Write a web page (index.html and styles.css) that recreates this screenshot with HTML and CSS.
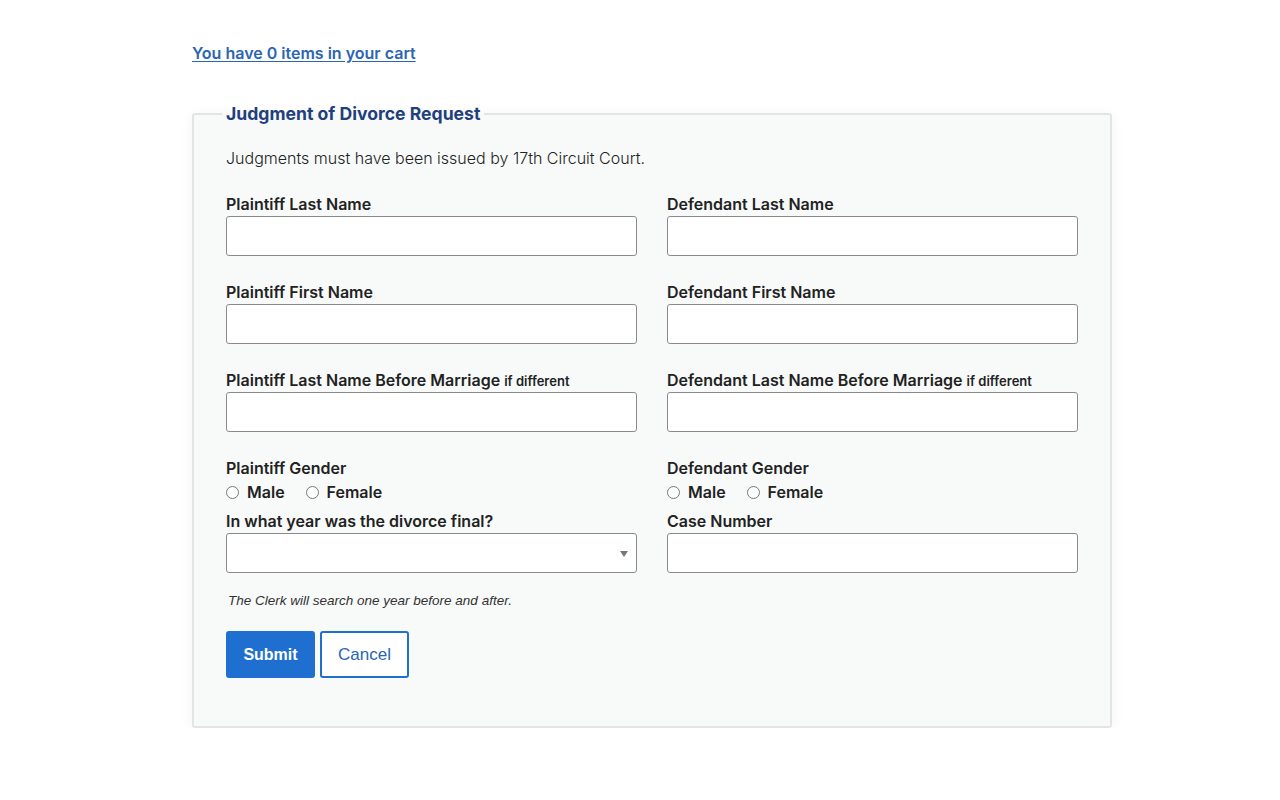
FILE: index.html
```html
<!DOCTYPE html>
<html lang="en">
<head>
<meta charset="utf-8">
<title>Judgment of Divorce Request</title>
<link rel="stylesheet" href="styles.css">
</head>
<body>
<div class="page">
  <p class="cart"><a href="#">You have 0 items in your cart</a></p>
  <form class="request">
    <fieldset class="panel">
      <legend class="panel-title">Judgment of Divorce Request</legend>
      <p class="intro">Judgments must have been issued by 17th Circuit Court.</p>
      <div class="grid">
        <div class="field">
          <label class="label">Plaintiff Last Name</label>
          <input class="input" type="text">
        </div>
        <div class="field">
          <label class="label">Defendant Last Name</label>
          <input class="input" type="text">
        </div>
        <div class="field">
          <label class="label">Plaintiff First Name</label>
          <input class="input" type="text">
        </div>
        <div class="field">
          <label class="label">Defendant First Name</label>
          <input class="input" type="text">
        </div>
        <div class="field">
          <label class="label">Plaintiff Last Name Before Marriage <span class="hint">if different</span></label>
          <input class="input" type="text">
        </div>
        <div class="field">
          <label class="label">Defendant Last Name Before Marriage <span class="hint">if different</span></label>
          <input class="input" type="text">
        </div>
        <div class="field field-tight">
          <span class="label">Plaintiff Gender</span>
          <div class="radios">
            <label class="radio"><input type="radio" name="pg"><span>Male</span></label>
            <label class="radio"><input type="radio" name="pg"><span>Female</span></label>
          </div>
        </div>
        <div class="field field-tight">
          <span class="label">Defendant Gender</span>
          <div class="radios">
            <label class="radio"><input type="radio" name="dg"><span>Male</span></label>
            <label class="radio"><input type="radio" name="dg"><span>Female</span></label>
          </div>
        </div>
        <div class="field field-last">
          <label class="label">In what year was the divorce final?</label>
          <div class="select">
            <select class="input"><option></option></select>
          </div>
        </div>
        <div class="field field-last">
          <label class="label">Case Number</label>
          <input class="input" type="text">
        </div>
      </div>
      <p class="note">The Clerk will search one year before and after.</p>
      <div class="actions">
        <button type="button" class="btn btn-primary">Submit</button>
        <button type="button" class="btn btn-outline">Cancel</button>
      </div>
    </fieldset>
  </form>
</div>
</body>
</html>
```
FILE: styles.css
```css
html, body {
  margin: 0;
  padding: 0;
  background: #ffffff;
}
body {
  font-family: Inter, "Noto Sans", Arial, sans-serif;
  color: #222222;
}
.page {
  padding: 42px 168px 0 192px;
}
.cart {
  margin: 0;
  font-size: 16px;
  line-height: 22px;
  font-weight: 600;
}
.cart a {
  color: #2b65b3;
  text-decoration: underline;
  text-underline-offset: 2px;
}
.request {
  margin: 39px 0 0 0;
}
.panel {
  margin: 0;
  border: 2px solid #e2e5e6;
  border-radius: 3px;
  background: #f8fafa;
  box-shadow: 0 2px 14px rgba(0, 0, 0, 0.05);
  padding: 0 31px 48px 32px;
  min-width: 0;
}
.panel-title {
  font-size: 17.6px;
  font-weight: 700;
  color: #1f3f7f;
  padding: 0 4px;
  margin-left: -4px;
  line-height: 22px;
}
.intro {
  margin: 22px 0 0 0;
  font-size: 16px;
  line-height: 22px;
  font-weight: 300;
  color: #222;
}
.grid {
  margin-top: 25px;
  display: grid;
  grid-template-columns: 411px 411px;
  column-gap: 30px;
}
.field {
  display: flex;
  flex-direction: column;
  margin-bottom: 26px;
}
.field-tight {
  margin-bottom: 7px;
}
.field-last {
  margin-bottom: 0;
}
.label {
  font-size: 16px;
  line-height: 20px;
  height: 20px;
  font-weight: 600;
  color: #222;
  margin-bottom: 2px;
}
.hint {
  font-size: 13px;
  font-weight: 600;
  line-height: 1;
}
.input {
  box-sizing: border-box;
  width: 100%;
  height: 40px;
  border: 1px solid #8a8a8a;
  border-radius: 3px;
  background: #ffffff;
  font-family: inherit;
  font-size: 16px;
  padding: 0 10px;
  margin: 0;
}
.select {
  position: relative;
}
.select select {
  appearance: none;
  -webkit-appearance: none;
}
.select::after {
  content: "";
  position: absolute;
  right: 9px;
  top: 18px;
  border-left: 4px solid transparent;
  border-right: 4px solid transparent;
  border-top: 6px solid #777;
  pointer-events: none;
}
.radios {
  display: flex;
  gap: 21px;
  height: 24px;
  align-items: center;
}
.radio {
  display: flex;
  align-items: center;
  font-size: 16px;
  font-weight: 600;
  color: #222;
}
.radio input {
  margin: 0 8px 0 0;
  width: 13px;
  height: 13px;
}
.note {
  margin: 19px 0 0 2px;
  font-family: "Liberation Sans", Arial, sans-serif;
  font-style: italic;
  font-size: 13.5px;
  line-height: 17px;
  color: #333;
}
.actions {
  margin-top: 22px;
  display: flex;
  gap: 5px;
}
.btn {
  box-sizing: border-box;
  width: 89px;
  height: 47px;
  border-radius: 3px;
  font-family: "Liberation Sans", Arial, sans-serif;
  font-size: 16px;
  cursor: pointer;
}
.btn-primary {
  background: #1f6fd1;
  border: 2px solid #1f6fd1;
  color: #ffffff;
  font-weight: 700;
}
.btn-outline {
  background: #ffffff;
  border: 2px solid #1f6fd1;
  color: #2a64b8;
  font-size: 17px;
  font-weight: 400;
}
```
